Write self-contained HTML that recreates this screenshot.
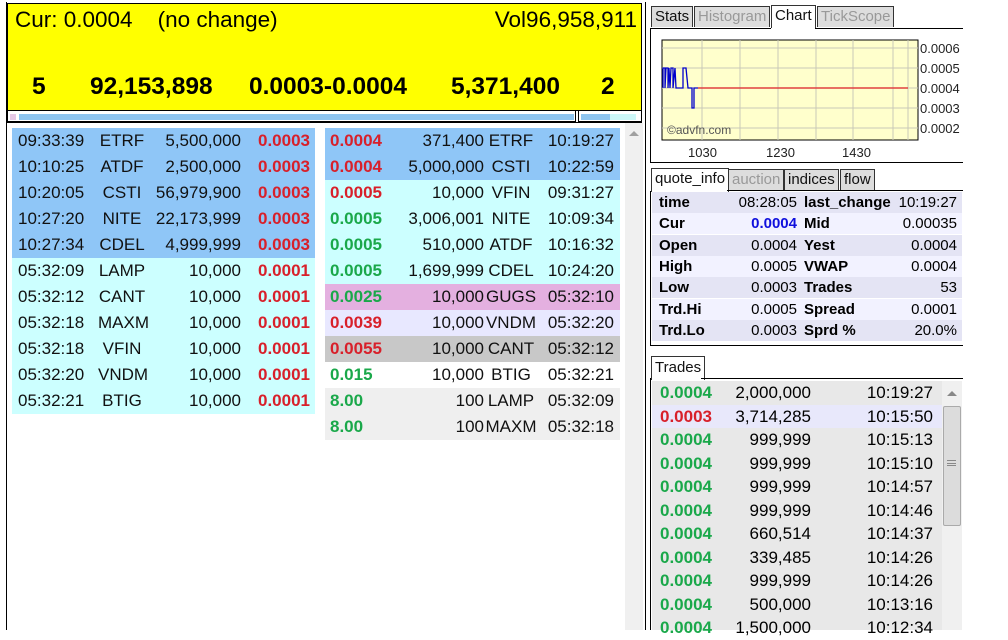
<!DOCTYPE html>
<html><head><meta charset="utf-8"><style>
*{margin:0;padding:0;box-sizing:border-box}
body{width:1008px;height:630px;overflow:hidden;background:#fff;font-family:"Liberation Sans",Arial,sans-serif;position:relative}
.a{position:absolute}
.row{position:absolute;height:26px;font-size:17px;line-height:26px;color:#111}
.row span{position:absolute;white-space:nowrap}
.r{color:#d8202a}.g{color:#1aa84a}.b{font-weight:bold}
.tab{position:absolute;border:1px solid #333;border-bottom:none;font-size:15px;line-height:20px;padding:0 3px;background:#ddd;color:#999}
.tab.on{background:#fff;color:#111}
.tab.k{color:#111}
.q{position:absolute;left:652px;width:310px;height:21px;font-size:15px;line-height:21px}
.q span{position:absolute;white-space:nowrap}
.t{position:absolute;left:652px;width:290px;height:23.5px;font-size:17px;line-height:23.5px}
.t span{position:absolute;white-space:nowrap}
</style></head><body>
<div class="a" style="left:6px;top:2px;width:640px;height:628px;border-left:1px solid #000;border-right:1px solid #000"></div>
<div class="a" style="left:7px;top:3px;width:635px;height:108px;background:#ffff00;border:1px solid #000"></div>
<div class="a" style="left:15px;top:7px;font-size:22.5px">Cur: 0.0004&nbsp;&nbsp;&nbsp;&nbsp;(no change)</div>
<div class="a" style="right:371px;top:7px;font-size:22.5px">Vol96,958,911</div>
<div class="a b" style="left:32px;top:73px;font-size:24.5px">5</div>
<div class="a b" style="left:90px;top:73px;font-size:24.5px">92,153,898</div>
<div class="a b" style="left:249px;top:73px;font-size:24.5px">0.0003-0.0004</div>
<div class="a b" style="left:451px;top:73px;font-size:24.5px">5,371,400</div>
<div class="a b" style="left:601px;top:73px;font-size:24.5px">2</div>
<div class="a" style="left:7px;top:111px;width:569px;height:11px;border:1px solid #000;border-top:none"></div>
<div class="a" style="left:19px;top:114px;width:555px;height:6px;background:#8ec5f0"></div>
<div class="a" style="left:10px;top:114px;width:6px;height:6px;background:#e6c8e6"></div>
<div class="a" style="left:578px;top:111px;width:64px;height:11px;border:1px solid #000;border-top:none"></div>
<div class="a" style="left:581px;top:114px;width:29px;height:6px;background:#8ec5f0"></div>
<div class="a" style="left:610px;top:114px;width:26px;height:6px;background:#ccf7f7"></div>
<div class="a" style="left:7px;top:122px;width:635px;height:1px;background:#000"></div>
<div class="a" style="left:625px;top:123px;width:18px;height:507px;background:#f0f0f0"></div>
<div class="a" style="left:629px;top:131px;width:0;height:0;border-left:5px solid transparent;border-right:5px solid transparent;border-bottom:5px solid #a0a0a0"></div>
<div class="a" style="left:12px;top:128px;width:303px;height:130px;background:#8fc6f7"></div>
<div class="a" style="left:12px;top:258px;width:303px;height:156px;background:#ccffff"></div>
<div class="a" style="left:325px;top:128px;width:295px;height:52px;background:#8fc6f7"></div>
<div class="a" style="left:325px;top:180px;width:295px;height:104px;background:#ccffff"></div>
<div class="a" style="left:325px;top:284px;width:295px;height:26px;background:#e4b0e0"></div>
<div class="a" style="left:325px;top:310px;width:295px;height:26px;background:#e8e8ff"></div>
<div class="a" style="left:325px;top:336px;width:295px;height:26px;background:#c8c8c8"></div>
<div class="a" style="left:325px;top:388px;width:295px;height:52px;background:#efefef"></div>
<div id="L"></div>
<div class="tab k" style="left:651px;top:6px">Stats</div>
<div class="tab" style="left:694px;top:6px">Histogram</div>
<div class="tab on" style="left:771px;top:5px;height:24px">Chart</div>
<div class="tab" style="left:817px;top:6px">TickScope</div>
<div class="a" style="left:650px;top:28px;width:313px;height:135px;border:1px solid #000;border-right:none;background:#fff"></div>
<div class="a" style="left:771px;top:28px;width:44px;height:2px;background:#fff"></div>
<svg class="a" style="left:650px;top:28px" width="320" height="140">
<rect x="12" y="12" width="256" height="100" fill="#ffffcc" stroke="#000"/>
<g stroke="#c8c8b8" stroke-width="1">
<line x1="12" y1="20" x2="268" y2="20"/><line x1="12" y1="40" x2="268" y2="40"/><line x1="12" y1="60" x2="268" y2="60"/><line x1="12" y1="80" x2="268" y2="80"/><line x1="12" y1="100" x2="268" y2="100"/>
<line x1="52" y1="12" x2="52" y2="112"/><line x1="90" y1="12" x2="90" y2="112"/><line x1="128" y1="12" x2="128" y2="112"/><line x1="166" y1="12" x2="166" y2="112"/><line x1="203" y1="12" x2="203" y2="112"/><line x1="243" y1="12" x2="243" y2="112"/><line x1="258" y1="12" x2="258" y2="112"/>
</g>
<line x1="48" y1="60" x2="258" y2="60" stroke="#e04040" stroke-width="1.5"/>
<polyline fill="none" stroke="#0000cc" stroke-width="1.3" points="13,60 13,40 15,40 15,60 16,40 18,40 18,60 19,40 20,60 21,40 23,40 23,60 25,40 26,60 33,60 33,40 36,40 38,60 42,60 42,80 44,80 44,60 48,60"/>
<g font-size="13" fill="#222" font-family="Liberation Sans,sans-serif">
<text x="270" y="25">0.0006</text><text x="270" y="45">0.0005</text><text x="270" y="65">0.0004</text><text x="270" y="85">0.0003</text><text x="270" y="105">0.0002</text>
<text x="17" y="106" fill="#555" font-size="12">©advfn.com</text>
<text x="38" y="129" font-size="13">1030</text><text x="116" y="129" font-size="13">1230</text><text x="192" y="129" font-size="13">1430</text>
</g>
</svg>
<div class="tab on" style="left:651px;top:168px;height:24px;font-size:15px">quote_info</div>
<div class="tab" style="left:728px;top:169px;font-size:15px">auction</div>
<div class="tab k" style="left:784px;top:169px;font-size:15px">indices</div>
<div class="tab k" style="left:840px;top:169px;font-size:15px">flow</div>
<div class="a" style="left:650px;top:191px;width:313px;height:155px;border:1px solid #000;border-right:none;border-top:none"></div>
<div class="a" style="left:727px;top:190px;width:236px;height:1px;background:#000"></div>
<div id="Q"></div>
<div class="tab on" style="left:651px;top:356px;height:24px;font-size:15px;line-height:22px">Trades</div>
<div class="a" style="left:650px;top:378px;width:313px;height:252px;border-left:1px solid #000"></div>
<div class="a" style="left:701px;top:378px;width:262px;height:1px;background:#000"></div>
<div class="a" style="left:652px;top:381px;width:290px;height:249px;background:#e8e8e8"></div>
<div class="a" style="left:942px;top:381px;width:20px;height:249px;background:#f0f0f0"></div>
<div class="a" style="left:947px;top:391px;width:0;height:0;border-left:5px solid transparent;border-right:5px solid transparent;border-bottom:5px solid #888"></div>
<div class="a" style="left:943px;top:406px;width:18px;height:120px;background:#dcdcdc;border:1px solid #aaa;border-radius:2px"></div>
<div class="a" style="left:947px;top:460px;width:9px;height:6px;border-top:1px solid #888;border-bottom:1px solid #888"></div>
<div class="a" style="left:947px;top:463px;width:9px;height:1px;background:#888"></div>
<div id="T"></div>
<script>
var L=[["09:33:39","ETRF","5,500,000","0.0003"],["10:10:25","ATDF","2,500,000","0.0003"],["10:20:05","CSTI","56,979,900","0.0003"],["10:27:20","NITE","22,173,999","0.0003"],["10:27:34","CDEL","4,999,999","0.0003"],["05:32:09","LAMP","10,000","0.0001"],["05:32:12","CANT","10,000","0.0001"],["05:32:18","MAXM","10,000","0.0001"],["05:32:18","VFIN","10,000","0.0001"],["05:32:20","VNDM","10,000","0.0001"],["05:32:21","BTIG","10,000","0.0001"]];
var R=[["0.0004","r","371,400","ETRF","10:19:27"],["0.0004","r","5,000,000","CSTI","10:22:59"],["0.0005","r","10,000","VFIN","09:31:27"],["0.0005","g","3,006,001","NITE","10:09:34"],["0.0005","g","510,000","ATDF","10:16:32"],["0.0005","g","1,699,999","CDEL","10:24:20"],["0.0025","g","10,000","GUGS","05:32:10"],["0.0039","r","10,000","VNDM","05:32:20"],["0.0055","r","10,000","CANT","05:32:12"],["0.015","g","10,000","BTIG","05:32:21"],["8.00","g","100","LAMP","05:32:09"],["8.00","g","100","MAXM","05:32:18"]];
var h="";
L.forEach(function(r,i){var y=128+i*26;h+='<div class="row" style="left:12px;top:'+y+'px;width:303px"><span style="left:6px">'+r[0]+'</span><span style="left:86px;width:48px;text-align:center;display:inline-block">'+r[1]+'</span><span style="right:74px">'+r[2]+'</span><span class="r b" style="right:5px">'+r[3]+'</span></div>';});
R.forEach(function(r,i){var y=128+i*26;h+='<div class="row" style="left:325px;top:'+y+'px;width:295px"><span class="'+r[1]+' b" style="left:5px">'+r[0]+'</span><span style="right:136px">'+r[2]+'</span><span style="left:160px;width:52px;text-align:center;display:inline-block">'+r[3]+'</span><span style="right:6px">'+r[4]+'</span></div>';});
document.getElementById("L").outerHTML=h;
var Q=[["time","08:28:05","last_change","10:19:27"],["Cur","0.0004","Mid","0.00035"],["Open","0.0004","Yest","0.0004"],["High","0.0005","VWAP","0.0004"],["Low","0.0003","Trades","53"],["Trd.Hi","0.0005","Spread","0.0001"],["Trd.Lo","0.0003","Sprd %","20.0%"]];
h="";Q.forEach(function(r,i){var y=192+i*21.3;h+='<div class="q" style="top:'+y+'px;background:'+(i%2?'#f2f2ff':'#e4e4f4')+'"><span class="b" style="left:7px">'+r[0]+'</span><span style="right:165px;'+(i==1?'color:#1010dd;font-weight:bold':'')+'">'+r[1]+'</span><span class="b" style="left:152px">'+r[2]+'</span><span style="right:5px">'+r[3]+'</span></div>';});
document.getElementById("Q").outerHTML=h;
var T=[["0.0004","2,000,000","10:19:27"],["0.0003","3,714,285","10:15:50"],["0.0004","999,999","10:15:13"],["0.0004","999,999","10:15:10"],["0.0004","999,999","10:14:57"],["0.0004","999,999","10:14:46"],["0.0004","660,514","10:14:37"],["0.0004","339,485","10:14:26"],["0.0004","999,999","10:14:26"],["0.0004","500,000","10:13:16"],["0.0004","1,500,000","10:12:34"]];
h="";T.forEach(function(r,i){var y=381+i*23.5;h+='<div class="t" style="top:'+y+'px;'+(i==1?'background:#e8e8fb':'')+'"><span class="b '+(i==1?'r':'g')+'" style="left:8px">'+r[0]+'</span><span style="right:131px">'+r[1]+'</span><span style="right:9px">'+r[2]+'</span></div>';});
document.getElementById("T").outerHTML=h;
</script>
</body></html>
